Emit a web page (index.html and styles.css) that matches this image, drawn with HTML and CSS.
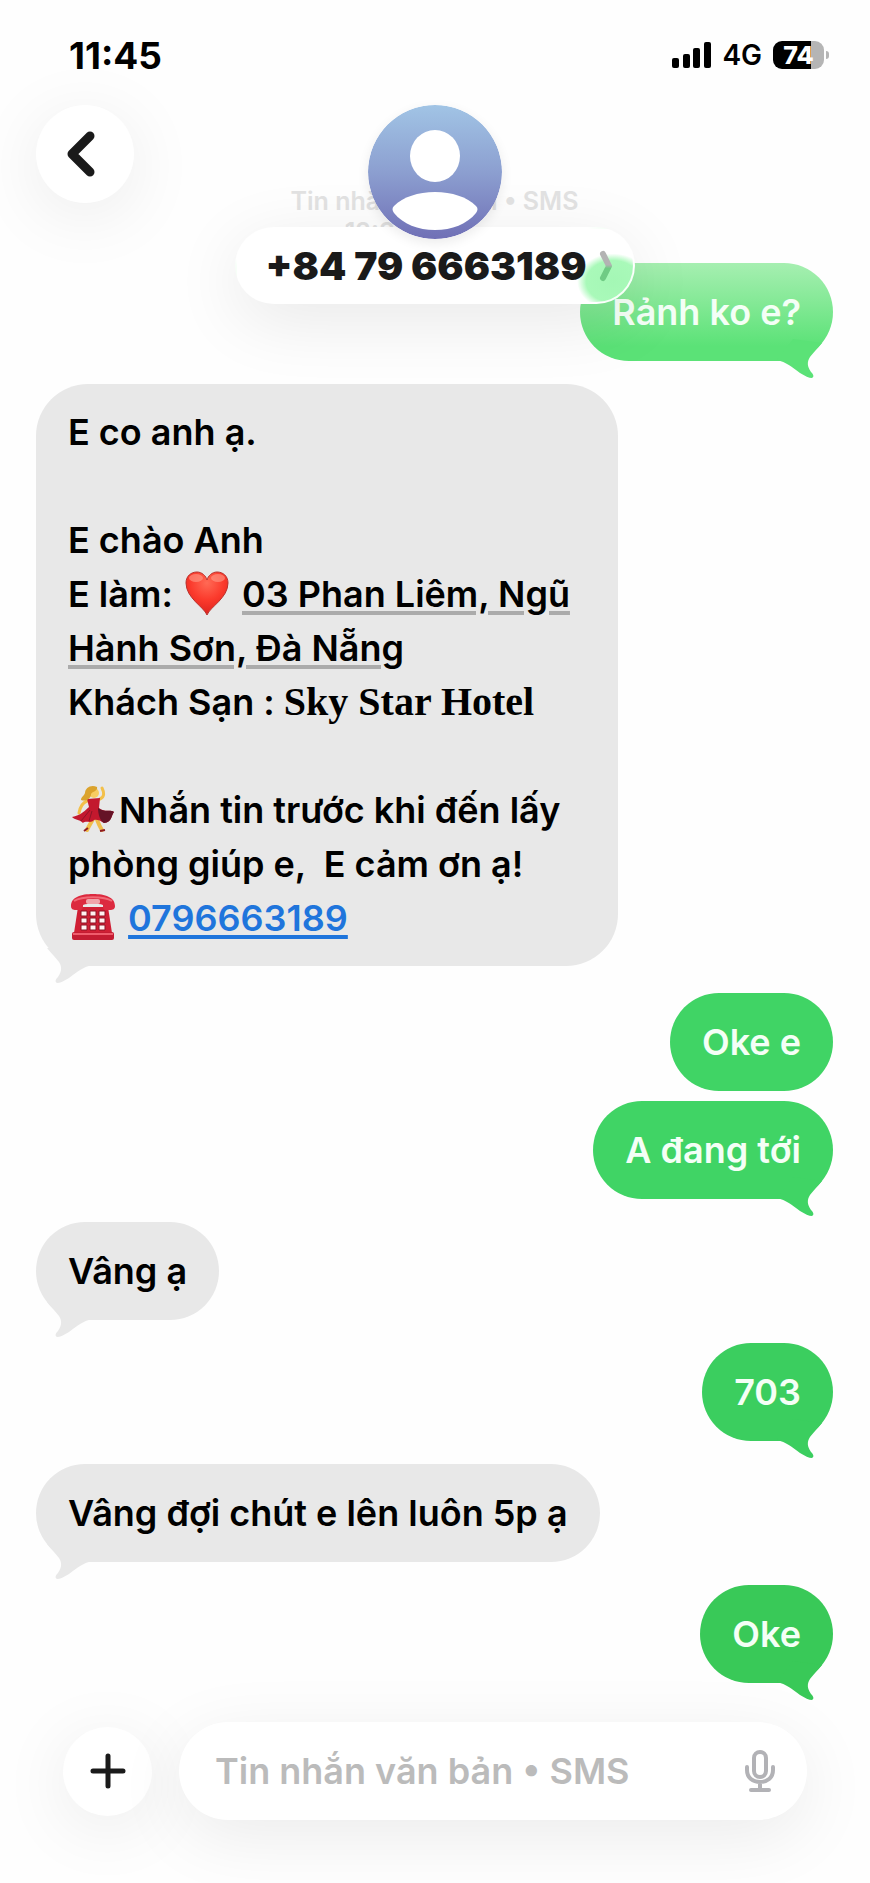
FILE: index.html
```html
<!DOCTYPE html>
<html lang="vi">
<head>
<meta charset="utf-8">
<meta name="viewport" content="width=device-width, initial-scale=1">
<title>+84 79 6663189</title>
<link rel="stylesheet" href="styles.css">
</head>
<body>
<svg class="defs" aria-hidden="true">
  <symbol id="tail" viewBox="0 0 60 50">
    <path d="M4 29C13 31 19 36 27 42C32 45 36 47 39 47C41 46 41 44 38 41C34 35 34 31 37 26C40 22 44 18 49 12L20 8Z"/>
  </symbol>
</svg>
<div class="screen">
  <header class="top">
    <div class="status">
      <time class="clock">11:45</time>
      <div class="indicators">
        <svg class="signal" viewBox="0 0 39 26" aria-label="Tín hiệu">
          <rect x="0" y="16" width="7" height="10" rx="2"/>
          <rect x="11" y="12" width="7" height="14" rx="2"/>
          <rect x="21" y="6" width="7" height="20" rx="2"/>
          <rect x="32" y="0" width="7" height="26" rx="2"/>
        </svg>
        <span class="network">4G</span>
        <span class="battery"><span class="level">74</span></span>
      </div>
    </div>
    <div class="bar">
      <button class="round back" aria-label="Quay lại">
        <svg viewBox="0 0 28 46" class="chevron"><path d="M23 5L5 23L23 41"/></svg>
      </button>
      <div class="contact">
        <svg class="avatar" viewBox="0 0 134 134" aria-hidden="true">
          <defs>
            <linearGradient id="sky" x1="0" y1="0" x2="0" y2="1">
              <stop offset="0" stop-color="#a1c4e5"/>
              <stop offset="0.5" stop-color="#8c9fd0"/>
              <stop offset="1" stop-color="#7070b6"/>
            </linearGradient>
          </defs>
          <circle cx="67" cy="67" r="67" fill="url(#sky)"/>
          <ellipse cx="67" cy="51" rx="25" ry="26" fill="#fff"/>
          <path d="M26 101C35 92 50 87 67 87C84 87 99 92 108 101Q111 104 108 108C99 119 84 125 67 125C50 125 35 119 26 108Q23 104 26 101Z" fill="#fff"/>
        </svg>
        <button class="name">+84 79 6663189
          <svg class="more" viewBox="0 0 14 32" aria-hidden="true">
            <defs>
              <linearGradient id="tint" x1="0" y1="0" x2="0" y2="1">
                <stop offset="0.45" stop-color="#b3b3b3"/>
                <stop offset="0.6" stop-color="#6fcb84"/>
              </linearGradient>
            </defs>
            <path d="M4 4L10 16L4 28" stroke="url(#tint)"/>
          </svg>
        </button>
      </div>
    </div>
  </header>

  <main class="thread">
    <p class="stamp">Tin nhắn văn bản • SMS<br>12:30 Hôm nay</p>
    <div class="msg out faded"><p>Rảnh ko e?</p><svg class="tail"><use href="#tail"/></svg></div>
    <div class="msg in long">
      <p>E co anh ạ.<br><br>E chào Anh<br>E làm: <svg class="emoji" viewBox="0 0 48 48" role="img" aria-label="❤️">
          <defs>
            <radialGradient id="heart" cx="0.5" cy="0.25" r="0.8">
              <stop offset="0" stop-color="#ff6a55"/>
              <stop offset="0.5" stop-color="#fb3a2c"/>
              <stop offset="1" stop-color="#d81f1c"/>
            </radialGradient>
          </defs>
          <path d="M24 46C21 38 3 29 3 14C3 7 8 3 14 3C19 3 23 7 24 11C25 7 29 3 34 3C40 3 45 7 45 14C45 29 27 38 24 46Z" fill="url(#heart)" stroke="#b9332e" stroke-width="1"/>
          <ellipse cx="13" cy="9" rx="7" ry="4" fill="#ff9c8a" opacity="0.6"/>
          <ellipse cx="35" cy="9" rx="7" ry="4" fill="#ff9c8a" opacity="0.6"/>
        </svg> <a class="place" href="#map">03 Phan Liêm, Ngũ<br>Hành Sơn, Đà Nẵng</a><br>Khách Sạn : <b class="hotel">Sky Star Hotel</b><br><br><svg class="emoji" viewBox="0 0 48 48" role="img" aria-label="💃">
          <path d="M31 14C36 12 35 7 33 3" fill="none" stroke="#f3c04a" stroke-width="3" stroke-linecap="round"/>
          <path d="M18 16C13 18 11 22 10 28" fill="none" stroke="#f3c04a" stroke-width="3" stroke-linecap="round"/>
          <path d="M27 30C28 37 30 40 33 45M25 32C22 38 20 41 18 45" fill="none" stroke="#f0bd4c" stroke-width="4" stroke-linecap="round"/>
          <path d="M18 14L31 13L30 23C36 28 41 24 45 27C42 31 43 37 35 38C31 35 27 34 25 35C22 39 17 35 14 38C10 34 6 35 3 32C9 31 14 28 20 22Z" fill="#c3182e"/>
          <path d="M29 23C36 28 41 24 45 27C42 31 43 37 35 38C31 36 29 29 29 23Z" fill="#651327"/>
          <path d="M21 25L12 36M23 26L20 36" stroke="#8b1428" stroke-width="1"/>
          <circle cx="25" cy="8" r="5" fill="#f8cd62"/>
          <path d="M28 2C22-1 16 3 16 8C15 11 12 12 12 15C18 17 22 13 22 9C24 6 29 6 28 2Z" fill="#dba32d"/>
          <path d="M15 46L19 43M31 46L36 45" stroke="#8e1b22" stroke-width="2"/>
        </svg>Nhắn tin trước khi đến lấy<br>phòng giúp e, &nbsp;E cảm ơn ạ!<br><svg class="emoji" viewBox="0 0 48 48" role="img" aria-label="☎️">
          <path d="M9 14H39L43 40H5Z" fill="#d01f34"/>
          <path d="M2 13C2 4 12 1 24 1C36 1 46 4 46 13C46 16 44 17 41 17H37C34 17 34 15 34 12C29 10 19 10 14 12C14 15 14 17 11 17H7C4 17 2 16 2 13Z" fill="#dc2a3f"/>
          <path d="M5 8C13 3 35 3 43 8" fill="none" stroke="#f16b77" stroke-width="2"/>
          <rect x="17" y="6" width="14" height="5" rx="2" fill="#f0a4aa"/>
          <rect x="3" y="39" width="42" height="8" rx="2" fill="#c41c32"/>
          <path d="M4 41H44" stroke="#ef5c6c" stroke-width="2"/>
          <path d="M12 18H18V23H12ZM21 18H27V23H21ZM30 18H36V23H30ZM12 25H18V30H12ZM21 25H27V30H21ZM30 25H36V30H30ZM12 32H18V37H12ZM21 32H27V37H21ZM30 32H36V37H30Z" fill="#fff3f1" stroke="#8d1525" stroke-width="1"/>
        </svg> <a class="phone" href="tel:0796663189">0796663189</a></p>
      <svg class="tail"><use href="#tail"/></svg>
    </div>
    <div class="msg out g1 joined"><p>Oke e</p></div>
    <div class="msg out g1"><p>A đang tới</p><svg class="tail"><use href="#tail"/></svg></div>
    <div class="msg in"><p>Vâng ạ</p><svg class="tail"><use href="#tail"/></svg></div>
    <div class="msg out g2"><p>703</p><svg class="tail"><use href="#tail"/></svg></div>
    <div class="msg in"><p>Vâng đợi chút e lên luôn 5p ạ</p><svg class="tail"><use href="#tail"/></svg></div>
    <div class="msg out g3"><p>Oke</p><svg class="tail"><use href="#tail"/></svg></div>
  </main>

  <form class="composer">
    <button type="button" class="round add" aria-label="Thêm">
      <svg class="plus" viewBox="0 0 36 36"><path d="M18 3V33M3 18H33"/></svg>
    </button>
    <div class="field">
      <input type="text" aria-label="Tin nhắn" placeholder="Tin nhắn văn bản • SMS">
      <button type="button" class="mic" aria-label="Đọc chính tả">
        <svg viewBox="0 0 30 42"><rect x="9" y="2" width="12" height="25" rx="6"/><path d="M2 17V20C2 28 8 32 15 32C22 32 28 28 28 20V17M15 32V39M6 40H24"/></svg>
      </button>
    </div>
  </form>
</div>
</body>
</html>
```
FILE: styles.css
```css
* { box-sizing: border-box; }

body {
  margin: 0;
  background: #fefefe;
  color: #000;
  font-family: Inter, "Noto Sans", sans-serif;
}

p { margin: 0; }

button {
  border: 0;
  padding: 0;
  background: none;
  font: inherit;
  color: inherit;
}

.defs {
  position: absolute;
  width: 0;
  height: 0;
}

.screen {
  position: relative;
  display: flex;
  flex-direction: column;
  min-height: 100vh;
  overflow: hidden;
}

/* Floating header, drawn over the scrolled thread */
.top {
  position: absolute;
  top: 0;
  left: 0;
  right: 0;
  z-index: 2;
  padding: 35px 36px 0;
}

.status {
  display: flex;
  justify-content: space-between;
  align-items: center;
  height: 40px;
  padding: 0 10px 0 33px;
}

.clock {
  font-size: 37px;
  font-weight: 700;
}

.indicators {
  display: flex;
  align-items: center;
  gap: 11px;
}

.signal {
  width: 39px;
  height: 26px;
}

.network {
  font-size: 28px;
  font-weight: 600;
}

.battery {
  position: relative;
  display: flex;
  width: 51px;
  height: 28px;
  border-radius: 9px;
  background: linear-gradient(90deg, #000 75%, #b5b5b5 75%);
}

.battery::after {
  content: "";
  position: absolute;
  right: -5px;
  top: 10px;
  width: 3px;
  height: 8px;
  border-radius: 0 4px 4px 0;
  background: #b5b5b5;
}

.level {
  flex: 1;
  color: #fff;
  font-size: 25px;
  font-weight: 800;
  line-height: 28px;
  text-align: center;
}

.bar {
  display: grid;
  grid-template-columns: 1fr auto 1fr;
  align-items: start;
  padding-top: 30px;
}

.round {
  display: grid;
  flex: none;
  place-items: center;
  border-radius: 50%;
  background: #fff;
  box-shadow: 0 12px 70px rgba(0, 0, 0, 0.08);
}

.back {
  width: 98px;
  height: 98px;
}

.chevron {
  width: 28px;
  height: 46px;
  margin-right: 8px;
  fill: none;
  stroke: #1a1a1a;
  stroke-width: 9;
  stroke-linecap: round;
  stroke-linejoin: round;
}

.contact {
  display: flex;
  flex-direction: column;
  align-items: center;
}

.avatar {
  position: relative;
  z-index: 1;
  width: 134px;
  height: 134px;
  margin-bottom: -12px;
  border-radius: 50%;
  box-shadow: 0 4px 12px rgba(0, 0, 0, 0.08);
}

.name {
  display: flex;
  align-items: center;
  gap: 12px;
  height: 77px;
  padding: 0 20px 0 28px;
  border: 2px solid rgba(255, 255, 255, 0.9);
  border-radius: 39px;
  background: radial-gradient(ellipse 36px 28px at 95% 72%, #a4f7b5 0, #a9f9b9 75%, #fff 100%) #fff;
  box-shadow: 0 16px 70px rgba(0, 0, 0, 0.09);
  color: #1a1a1a;
  font-size: 39px;
  font-weight: 900;
  line-height: 1;
  white-space: nowrap;
}

.more {
  width: 14px;
  height: 32px;
  fill: none;
  stroke-width: 6;
  stroke-linecap: round;
  stroke-linejoin: round;
}

/* Thread */
.thread {
  display: flex;
  flex: 1;
  flex-direction: column;
  gap: 23px;
  padding: 186px 37px 37px 36px;
  font-size: 36px;
  font-weight: 600;
  line-height: 54px;
}

.stamp {
  margin-bottom: -8px;
  color: #e2e2e2;
  font-size: 25px;
  font-weight: 600;
  line-height: 31px;
  text-align: center;
}

.msg {
  position: relative;
  display: flex;
  align-items: center;
  min-height: 98px;
  padding: 21px 32px;
  border-radius: 49px;
}

.in {
  align-self: flex-start;
  background: #e8e8e8;
  fill: #e8e8e8;
}

.out {
  align-self: flex-end;
  color: #f4fff6;
}

.long {
  width: 73%;
  margin-bottom: 4px;
  padding-right: 0;
  border-radius: 52px;
}

.joined { margin-bottom: -13px; }

.faded {
  background: linear-gradient(#a6efb1, #84e996 40%, #5be277 85%);
  fill: #5be277;
}

.g1 { background: #40d465; fill: #40d465; }
.g2 { background: #3bce5f; fill: #3bce5f; }
.g3 { background: #39c958; fill: #39c958; }

.tail {
  position: absolute;
  right: 0;
  bottom: -20px;
  width: 60px;
  height: 50px;
}

.in .tail {
  right: auto;
  left: 0;
  transform: scaleX(-1);
}

.emoji {
  width: 48px;
  height: 48px;
  margin: 0 2px 0 1px;
  vertical-align: -10px;
}

.place {
  color: inherit;
  text-decoration: underline 4px #ababab;
  text-underline-offset: 4px;
}

.phone {
  color: #1f75dc;
  text-decoration: underline 4px;
  text-underline-offset: 4px;
}

.hotel {
  font-family: "Liberation Serif", serif;
  font-size: 40px;
  font-weight: 700;
  line-height: 1;
}

/* Message composer */
.composer {
  display: flex;
  align-items: center;
  gap: 27px;
  padding: 0 63px 63px;
}

.add {
  width: 89px;
  height: 89px;
}

.plus {
  width: 36px;
  height: 36px;
  fill: none;
  stroke: #1a1a1a;
  stroke-width: 5;
  stroke-linecap: round;
}

.field {
  display: flex;
  flex: 1;
  align-items: center;
  min-width: 0;
  height: 98px;
  padding: 0 32px 0 36px;
  border-radius: 49px;
  background: #fff;
  box-shadow: 0 16px 70px rgba(0, 0, 0, 0.08);
}

.field input {
  flex: 1;
  min-width: 0;
  border: 0;
  padding: 0;
  outline: 0;
  background: none;
  font: 600 36px Inter, "Noto Sans", sans-serif;
}

.field input::placeholder {
  color: #bbb;
  opacity: 1;
}

.mic svg {
  display: block;
  width: 30px;
  height: 42px;
  fill: none;
  stroke: #b2b2b6;
  stroke-width: 4;
  stroke-linecap: round;
}
```
